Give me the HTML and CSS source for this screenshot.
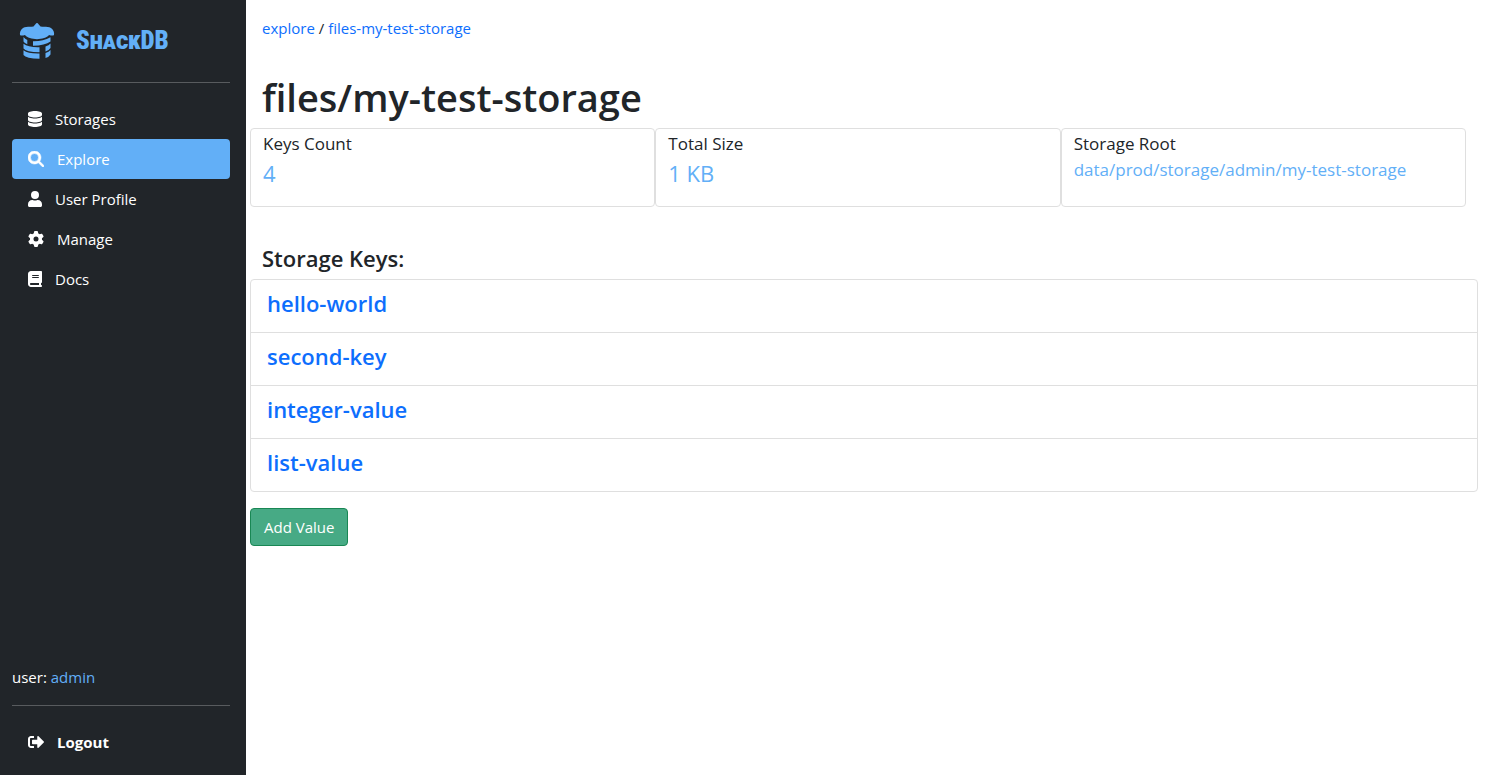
FILE: index.html
```html
<!DOCTYPE html>
<html lang="en">
<head>
<meta charset="utf-8">
<title>ShackDB</title>
<link rel="stylesheet" href="styles.css">
</head>
<body>
<div class="app">
  <aside class="sidebar">
    <a class="brand" href="#">
      <svg class="brand-logo" viewBox="0 0 36 38" aria-hidden="true">
        <path d="M18 1C19 1 20 3 21.500 4.500C25 5 29 4 32 6C34.500 8 35.500 10.500 35 13C34 14 32 13.500 30 13C26 18.500 10 18.500 6 13C4 13.500 2 14 1 13C.5 10.500 1.500 8 4 6C7 4 11 5 14.500 4.500C16 3 17 1 18 1Z"/>
        <path d="M4.500 15Q6 17 8.300 18V22.300Q5.500 21.300 4.500 19.500Z"/>
        <path d="M14 19.300Q24 19.500 31.500 15.200V19.500Q26 23.500 14 23.800Z"/>
        <path d="M4.500 21.800Q9 25.500 20.500 25.200V30.200Q7 30.200 4.500 26.500Z"/>
        <path d="M4.500 28.300Q9 31.800 20.500 31.500V36.800Q7 36.600 4.500 33Z"/>
        <path d="M26.500 24.400Q30 23.500 31.500 21.500V26Q30 28.500 26.500 29.500Z"/>
        <path d="M26.500 31Q30 30 31.500 28V32.500Q30 35 26.500 36Z"/>
      </svg>
      <span class="brand-name">ShackDB</span>
    </a>
    <hr class="rule">
    <nav class="nav">
      <a class="nav-link" href="#">
        <svg class="icon icon-narrow" viewBox="0 0 448 512" aria-hidden="true"><path d="M448 80v48c0 44.200-100.300 80-224 80S0 172.200 0 128V80C0 35.800 100.300 0 224 0S448 35.800 448 80zM393.200 214.700c20.800-7.400 39.900-16.900 54.800-28.600V288c0 44.200-100.300 80-224 80S0 332.200 0 288V186.100c14.900 11.800 34 21.200 54.800 28.600C99.700 230.700 159.500 240 224 240s124.300-9.300 169.200-25.300zM0 346.100c14.900 11.800 34 21.200 54.800 28.600C99.700 390.700 159.500 400 224 400s124.300-9.300 169.200-25.300c20.800-7.400 39.900-16.900 54.800-28.600V432c0 44.200-100.300 80-224 80S0 476.200 0 432V346.100z"/></svg>
        <span>Storages</span>
      </a>
      <a class="nav-link active" href="#" aria-current="page">
        <svg class="icon" viewBox="0 0 512 512" aria-hidden="true"><path d="M416 208c0 45.900-14.900 88.300-40 122.700L502.600 457.400c12.500 12.500 12.500 32.800 0 45.300s-32.800 12.500-45.300 0L330.700 376c-34.400 25.200-76.800 40-122.700 40C93.100 416 0 322.900 0 208S93.100 0 208 0S416 93.100 416 208zM208 336a128 128 0 1 0 0-256a128 128 0 1 0 0 256z" stroke="currentColor" stroke-width="16"/></svg>
        <span>Explore</span>
      </a>
      <a class="nav-link" href="#">
        <svg class="icon icon-narrow" viewBox="0 0 448 512" aria-hidden="true"><path d="M224 256A128 128 0 1 0 224 0a128 128 0 1 0 0 256zM134 288C60 288 0 348 0 422V464C0 490 22 512 48 512H400C426 512 448 490 448 464V422C448 348 388 288 314 288H297Q224 320 151 288Z"/></svg>
        <span>User Profile</span>
      </a>
      <a class="nav-link" href="#">
        <svg class="icon" viewBox="0 0 512 512" aria-hidden="true"><path d="M495.900 166.600c3.200 8.700 .5 18.400-6.400 24.600l-43.300 39.400c1.100 8.300 1.700 16.800 1.700 25.400s-.6 17.100-1.700 25.400l43.300 39.400c6.900 6.200 9.600 15.900 6.400 24.600c-4.400 11.900-9.700 23.300-15.800 34.300l-4.700 8.100c-6.600 11-14 21.400-22.100 31.200c-5.900 7.200-15.700 9.600-24.500 6.800l-55.700-17.700c-13.400 10.300-28.200 18.900-44 25.400l-12.500 57.100c-2 9.100-9 16.300-18.200 17.800c-13.800 2.300-28 3.500-42.500 3.500s-28.700-1.200-42.500-3.500c-9.200-1.500-16.200-8.700-18.200-17.800l-12.500-57.100c-15.800-6.500-30.600-15.100-44-25.400L83.100 425.900c-8.800 2.800-18.600 .3-24.500-6.800c-8.100-9.800-15.500-20.200-22.100-31.200l-4.700-8.100c-6.100-11-11.400-22.400-15.800-34.300c-3.200-8.700-.5-18.400 6.400-24.600l43.300-39.400C64.600 273.100 64 264.600 64 256s.6-17.100 1.700-25.400L22.400 191.200c-6.900-6.200-9.600-15.900-6.400-24.600c4.400-11.900 9.700-23.300 15.800-34.300l4.700-8.100c6.600-11 14-21.400 22.100-31.200c5.900-7.200 15.700-9.600 24.500-6.800l55.700 17.700c13.400-10.300 28.200-18.900 44-25.400l12.500-57.100c2-9.100 9-16.300 18.200-17.800C227.300 1.200 241.500 0 256 0s28.700 1.200 42.500 3.500c9.200 1.500 16.200 8.700 18.200 17.800l12.500 57.100c15.800 6.500 30.600 15.100 44 25.400l55.700-17.700c8.800-2.800 18.600-.3 24.500 6.800c8.100 9.800 15.500 20.200 22.100 31.200l4.700 8.100c6.100 11 11.400 22.400 15.800 34.300zM256 336a80 80 0 1 0 0-160a80 80 0 1 0 0 160z"/></svg>
        <span>Manage</span>
      </a>
      <a class="nav-link" href="#">
        <svg class="icon icon-narrow" viewBox="0 0 448 512" aria-hidden="true"><path d="M96 0C43 0 0 43 0 96V416c0 53 43 96 96 96H416c17.700 0 32-14.300 32-32s-14.300-32-32-32V384c17.700 0 32-14.300 32-32V32c0-17.700-14.300-32-32-32H96zm0 384H352v64H96c-17.700 0-32-14.300-32-32s14.300-32 32-32zm32-240c0-8.800 7.200-16 16-16H336c8.800 0 16 7.200 16 16s-7.200 16-16 16H144c-8.800 0-16-7.200-16-16zm16 48H336c8.800 0 16 7.200 16 16s-7.200 16-16 16H144c-8.800 0-16-7.200-16-16s7.200-16 16-16z"/></svg>
        <span>Docs</span>
      </a>
    </nav>
    <p class="account">user: <a class="account-name" href="#">admin</a></p>
    <hr class="rule">
    <a class="nav-link logout" href="#">
      <svg class="icon" viewBox="0 0 512 512" aria-hidden="true"><path d="M180 448H96c-53 0-96-43-96-96V160c0-53 43-96 96-96h84c7 0 12 5 12 12v40c0 7-5 12-12 12H96c-18 0-32 14-32 32v192c0 18 14 32 32 32h84c7 0 12 5 12 12v40c0 7-5 12-12 12zM505 239L337 71c-15-15-41-4.500-41 17v96H152c-13 0-24 11-24 24v96c0 13 11 24 24 24h144v96c0 21.500 26 32 41 17l168-168c9-9 9-25 0-34z"/></svg>
      <span>Logout</span>
    </a>
  </aside>
  <main class="content">
    <nav class="breadcrumb" aria-label="Breadcrumb"><a class="link" href="#">explore</a> / <a class="link" href="#">files-my-test-storage</a></nav>
    <h1 class="title">files/my-test-storage</h1>
    <section class="stats">
      <div class="stat">
        <h2 class="stat-label">Keys Count</h2>
        <p class="stat-value">4</p>
      </div>
      <div class="stat">
        <h2 class="stat-label">Total Size</h2>
        <p class="stat-value">1 KB</p>
      </div>
      <div class="stat">
        <h2 class="stat-label">Storage Root</h2>
        <p class="stat-value stat-path">data/prod/storage/admin/my-test-storage</p>
      </div>
    </section>
    <h2 class="subtitle">Storage Keys:</h2>
    <ul class="keys">
      <li class="key"><a class="link" href="#">hello-world</a></li>
      <li class="key"><a class="link" href="#">second-key</a></li>
      <li class="key"><a class="link" href="#">integer-value</a></li>
      <li class="key"><a class="link" href="#">list-value</a></li>
    </ul>
    <button class="add-button" type="button">Add Value</button>
  </main>
</div>
</body>
</html>
```
FILE: styles.css
```css
* {
  box-sizing: border-box;
}

body {
  margin: 0;
  background: #fff;
  color: #212529;
  font-family: "Segoe UI", "Open Sans", "Noto Sans", sans-serif;
  font-size: 15px;
  line-height: 24px;
}

a {
  color: inherit;
  text-decoration: none;
}

h1, h2, p, ul {
  margin: 0;
  padding: 0;
}

.app {
  display: flex;
  min-height: 100vh;
}

.sidebar {
  display: flex;
  flex-direction: column;
  flex: 0 0 246px;
  padding: 16px 16px 13px 12px;
  background: #212529;
  color: #fff;
}

.brand {
  display: flex;
  align-items: center;
  gap: 21px;
  height: 50px;
  padding-left: 7px;
  color: #62aff7;
}

.brand-logo {
  width: 36px;
  height: 38px;
  fill: currentColor;
}

.brand-name {
  font-family: "Roboto Condensed", "DejaVu Sans Condensed", sans-serif;
  font-size: 25px;
  font-weight: 900;
  font-variant: small-caps;
  line-height: 50px;
}

.rule {
  width: 100%;
  height: 1px;
  margin: 16px 0;
  border: 0;
  background: #585b5e;
}

.nav {
  flex: 1;
}

.nav-link {
  display: flex;
  align-items: center;
  gap: 13px;
  height: 40px;
  padding: 0 16px;
  border-radius: 4px;
}

.active {
  background: #62aff7;
}

.icon {
  width: 16px;
  height: 16px;
  fill: currentColor;
}

.icon-narrow {
  width: 14px;
}

.account-name {
  color: #62aff7;
}

.logout {
  font-weight: 700;
}

.content {
  flex: 1;
  min-width: 0;
  padding: 16px 14px 16px 4px;
}

.breadcrumb {
  padding-left: 12px;
}

.link {
  color: #0d6efd;
}

.title {
  margin-top: 34px;
  padding-left: 12px;
  font-size: 38px;
  font-weight: 600;
  line-height: 46px;
}

.stats {
  display: grid;
  grid-template-columns: repeat(3, 1fr);
  margin: 8px 12px 0 0;
}

.stat {
  min-height: 79px;
  padding: 3px 12px;
  border: 1px solid #dfdfdf;
  border-radius: 4px;
}

.stat-label {
  font-size: 17px;
  font-weight: 400;
  line-height: 24px;
}

.stat-value {
  color: #62aff7;
  font-size: 22px;
  line-height: 34px;
}

.stat-path {
  font-size: 17px;
  line-height: 28px;
}

.subtitle {
  margin-top: 36px;
  padding-left: 12px;
  font-size: 22px;
  font-weight: 600;
  line-height: 30px;
}

.keys {
  margin-top: 6px;
  border: 1px solid #dfdfdf;
  border-radius: 4px;
  list-style: none;
}

.key {
  padding: 8px 16px 14px;
  font-size: 22px;
  font-weight: 600;
  line-height: 30px;
}

.key + .key {
  border-top: 1px solid #dfdfdf;
}

.add-button {
  height: 38px;
  margin-top: 16px;
  padding: 0 13px;
  border: 1px solid #198754;
  border-radius: 4px;
  background: #47aa85;
  color: #fff;
  font: inherit;
}
```
